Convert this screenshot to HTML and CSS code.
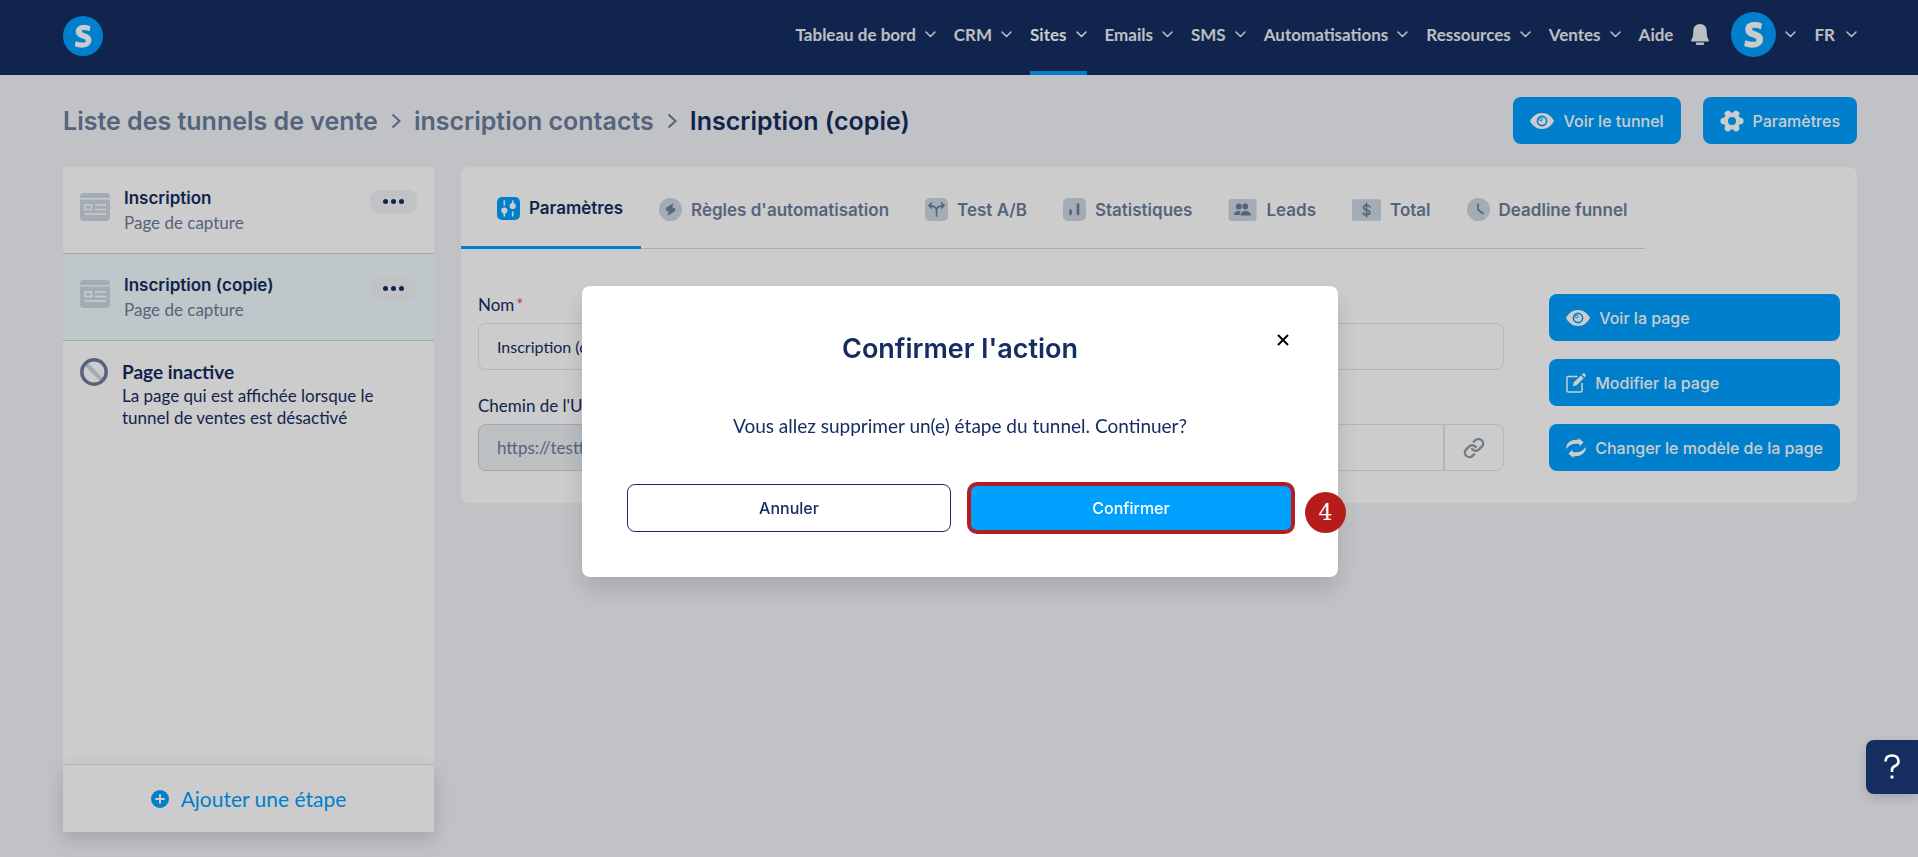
FILE: index.html
```html
<!DOCTYPE html>
<html lang="fr">
<head>
<meta charset="utf-8">
<meta name="viewport" content="width=device-width, initial-scale=1">
<title>Inscription (copie)</title>
<link rel="stylesheet" href="styles.css">
</head>
<body>
<svg class="defs" width="0" height="0" aria-hidden="true">
  <symbol id="logo" viewBox="0 0 40 40"><circle cx="20" cy="20" r="20" fill="#00a0ff"/><path d="M27 10.600C23.700 9 13.200 7.800 13.200 15.500C13.200 23 23.200 21 23.200 25C23.200 27.800 17.500 27.300 13 25.800L12.300 30C17.500 32 28 32.200 28 23.800C28 17.200 18.200 18.500 18.200 15C18.200 12.900 22.500 13.500 26.200 14.600Z" fill="#fff" stroke="#fff" stroke-width="1"/></symbol>
  <symbol id="chevron" viewBox="0 0 11 7"><path d="M1 1l4.500 4.500L10 1" fill="none" stroke="currentColor" stroke-width="1.500" stroke-linecap="round" stroke-linejoin="round"/></symbol>
  <symbol id="crumb" viewBox="0 0 10 16"><path d="M1.500 1.500L8.500 8l-7 6.500" fill="none" stroke="currentColor" stroke-width="2"/></symbol>
  <symbol id="bell" viewBox="0 0 18 21"><path d="M9 0C4.800 0 2.300 3 2.300 7C2.300 11.500 1.800 13.200.400 15.600C-.200 16.700.300 17.500 1.200 17.500H16.800C17.700 17.500 18.200 16.700 17.600 15.600C16.200 13.200 15.700 11.500 15.700 7C15.700 3 13.200 0 9 0ZM5 18.500H13V20Q13 21 12 21H6Q5 21 5 20Z" fill="currentColor"/></symbol>
  <symbol id="eye" viewBox="0 0 24 16"><path d="M12 0C6.500 0 2.500 3.500 0 8C2.500 12.500 6.500 16 12 16S21.500 12.500 24 8C21.500 3.500 17.500 0 12 0Z" fill="currentColor"/><circle cx="12" cy="8" r="4.600" fill="none" stroke="#00a0ff" stroke-width="1.600"/><circle cx="10.800" cy="6.500" r="1.400" fill="none" stroke="#00a0ff" stroke-width="1"/></symbol>
  <symbol id="gear" viewBox="0 0 24 24"><g fill="currentColor"><circle cx="12" cy="12" r="8.500"/><rect x="0.500" y="8.800" width="23" height="6.400" rx="3"/><rect x="0.500" y="8.800" width="23" height="6.400" rx="3" transform="rotate(60 12 12)"/><rect x="0.500" y="8.800" width="23" height="6.400" rx="3" transform="rotate(120 12 12)"/></g><circle cx="12" cy="12" r="4" fill="#00a0ff"/></symbol>
  <symbol id="page" viewBox="0 0 30 28"><path d="M4 0H26Q30 0 30 4V5H0V4Q0 0 4 0ZM0 6.500H30V24Q30 28 26 28H4Q0 28 0 24Z" fill="#ccd6e2"/><g fill="none" stroke="#fff" stroke-width="1.500"><rect x="5" y="11.800" width="6.500" height="4.800"/><path d="M15 12H26M15 16.500H26M4.500 21H26"/></g></symbol>
</svg>

<header class="topbar">
  <a class="brand" href="#" aria-label="Accueil"><svg><use href="#logo"/></svg></a>
  <nav class="nav" aria-label="Navigation principale">
    <a href="#">Tableau de bord<svg class="chev"><use href="#chevron"/></svg></a>
    <a href="#">CRM<svg class="chev"><use href="#chevron"/></svg></a>
    <a href="#" class="current">Sites<svg class="chev"><use href="#chevron"/></svg></a>
    <a href="#">Emails<svg class="chev"><use href="#chevron"/></svg></a>
    <a href="#">SMS<svg class="chev"><use href="#chevron"/></svg></a>
    <a href="#">Automatisations<svg class="chev"><use href="#chevron"/></svg></a>
    <a href="#">Ressources<svg class="chev"><use href="#chevron"/></svg></a>
    <a href="#">Ventes<svg class="chev"><use href="#chevron"/></svg></a>
    <a href="#">Aide</a>
    <button class="bell" aria-label="Notifications"><svg><use href="#bell"/></svg></button>
    <button class="account" aria-label="Compte"><svg class="avatar"><use href="#logo"/></svg><svg class="chev"><use href="#chevron"/></svg></button>
    <button class="lang">FR<svg class="chev"><use href="#chevron"/></svg></button>
  </nav>
</header>

<main class="page">
  <div class="heading">
    <h1 class="crumbs">
      <a href="#">Liste des tunnels de vente</a><svg><use href="#crumb"/></svg><a href="#">inscription contacts</a><svg><use href="#crumb"/></svg><span>Inscription (copie)</span>
    </h1>
    <div class="heading-actions">
      <button class="btn"><svg class="i-eye"><use href="#eye"/></svg>Voir le tunnel</button>
      <button class="btn"><svg class="i-gear"><use href="#gear"/></svg>Paramètres</button>
    </div>
  </div>

  <div class="columns">
    <aside class="steps">
      <div class="step">
        <svg class="step-icon"><use href="#page"/></svg>
        <div class="step-text"><a href="#">Inscription</a><p>Page de capture</p></div>
        <button class="more" aria-label="Options"><i></i><i></i><i></i></button>
      </div>
      <div class="step selected">
        <svg class="step-icon"><use href="#page"/></svg>
        <div class="step-text"><a href="#">Inscription (copie)</a><p>Page de capture</p></div>
        <button class="more" aria-label="Options"><i></i><i></i><i></i></button>
      </div>
      <div class="inactive">
        <svg viewBox="0 0 28 28"><path d="M6 6l16 16" stroke="#ccd6e2" stroke-width="4"/><circle cx="14" cy="14" r="12.200" fill="none" stroke="#6b7e9b" stroke-width="3.500"/></svg>
        <div><h2>Page inactive</h2><p>La page qui est affichée lorsque le tunnel de ventes est désactivé</p></div>
      </div>
      <button class="add"><svg viewBox="0 0 18 18"><circle cx="9" cy="9" r="9" fill="#00a0ff"/><path d="M9 5v8M5 9h8" stroke="#fff" stroke-width="2" stroke-linecap="round"/></svg>Ajouter une étape</button>
    </aside>

    <section class="panel">
      <nav class="tabs" aria-label="Sections">
        <a href="#" class="active"><svg viewBox="0 0 23 23"><rect width="23" height="23" rx="5" fill="#00a0ff"/><g stroke="#fff" stroke-width="1.600" stroke-linecap="round" fill="#fff"><path d="M7.300 4v4M7.300 13v6M15.700 4v5M15.700 15v4"/><circle cx="7.300" cy="13.500" r="2.300"/><circle cx="15.700" cy="9" r="2.300"/></g></svg>Paramètres</a>
        <a href="#"><svg viewBox="0 0 23 23"><circle cx="11.500" cy="11.500" r="11.500" fill="#ccd6e2"/><path d="M14 5.800L7.300 9.800V12.800H10.300L9 17.200L15.800 13V10.200H12.800Z" fill="#6b7e9b" stroke="#6b7e9b" stroke-width=".6" stroke-linejoin="round"/></svg>Règles d'automatisation</a>
        <a href="#"><svg viewBox="0 0 23 23"><rect width="23" height="23" rx="5" fill="#ccd6e2"/><path d="M11.500 18V12Q11.500 8 4 7.500M11.500 12Q11.500 8 19 7.500M6.500 5L4 7.500L6.500 10M16.500 5L19 7.500L16.500 10" fill="none" stroke="#6b7e9b" stroke-width="1.700" stroke-linecap="round" stroke-linejoin="round"/></svg>Test A/B</a>
        <a href="#"><svg viewBox="0 0 23 23"><rect width="23" height="23" rx="5" fill="#ccd6e2"/><path d="M7.500 12.500v3.500M15 6.500v9.500" stroke="#6b7e9b" stroke-width="2.600" stroke-linecap="round"/></svg>Statistiques</a>
        <a href="#"><svg class="wide" viewBox="0 0 28 22"><rect width="28" height="22" rx="3" fill="#ccd6e2"/><g fill="#6b7e9b"><circle cx="10.300" cy="7.500" r="2.900"/><circle cx="16.800" cy="7.500" r="2.900"/><path d="M5.500 16Q5.500 12 10 12Q12 12 12.300 12.500Q11 13.500 11 16ZM12 16.500Q12 12 17 12T22.500 16.500Z"/></g></svg>Leads</a>
        <a href="#"><svg class="wide" viewBox="0 0 30 22"><rect width="30" height="22" rx="2" fill="#ccd6e2"/><path d="M18.500 8Q18 6 15 6T11.800 8.400Q11.800 10.300 15 11T18.500 13.700Q18.500 16 15 16T11.500 14M15 4V18" fill="none" stroke="#6b7e9b" stroke-width="1.600" stroke-linecap="round"/></svg>Total</a>
        <a href="#"><svg viewBox="0 0 23 23"><circle cx="11.500" cy="11.500" r="11.500" fill="#ccd6e2"/><path d="M11 6V11.500L16 15.500" fill="none" stroke="#6b7e9b" stroke-width="1.700" stroke-linecap="round" stroke-linejoin="round"/></svg>Deadline funnel</a>
      </nav>
      <div class="panel-body">
        <form class="form">
          <label for="name">Nom<span class="req">*</span></label>
          <input id="name" class="field" type="text" value="Inscription (copie)">
          <label for="path">Chemin de l'URL</label>
          <div class="path field">
            <span class="prefix">https://testt</span>
            <input id="path" type="text">
            <button type="button" aria-label="Copier le lien"><svg viewBox="0 0 24 24"><g fill="none" stroke="#8f9dad" stroke-width="2.600" stroke-linecap="round" stroke-linejoin="round"><path d="M10 13a5 5 0 0 0 7.540.540l3-3a5 5 0 0 0-7.070-7.070l-1.720 1.710"/><path d="M14 11a5 5 0 0 0-7.540-.540l-3 3a5 5 0 0 0 7.070 7.070l1.710-1.710"/></g></svg></button>
          </div>
        </form>
        <div class="side-actions">
          <button class="btn"><svg class="i-eye"><use href="#eye"/></svg>Voir la page</button>
          <button class="btn"><svg class="i-sq" viewBox="0 0 20 20"><path d="M11.500 3.500H2.500Q1 3.500 1 5V17.500Q1 19 2.500 19H14.500Q16 19 16 17.500V10" fill="none" stroke="currentColor" stroke-width="1.500"/><path d="M6.800 13.200L7.800 9.300L14.800 2.500L17.600 5.200L10.700 12.200ZM15.700 1.600L16.600.700Q17.700-.200 18.900.800Q20.400 2.200 19.400 3.400L18.500 4.300Z" fill="currentColor"/></svg>Modifier la page</button>
          <button class="btn"><svg class="i-sq" viewBox="0 0 20 20"><g id="arrow" fill="currentColor"><path d="M0 11C0 5.500 5 .800 12.500 2V0L17.500 4.200L13.500 8.500V6C8 4.800 3.500 6.500 0 11Z"/></g><use href="#arrow" transform="rotate(180 10 10)"/></svg>Changer le modèle de la page</button>
        </div>
      </div>
    </section>
  </div>
</main>

<div class="backdrop">
  <div class="modal" role="dialog" aria-modal="true" aria-labelledby="dlg-title">
    <button class="close" aria-label="Fermer"><svg viewBox="0 0 12 12"><path d="M1 1l10 10M11 1L1 11" stroke="#000" stroke-width="2"/></svg></button>
    <h2 id="dlg-title">Confirmer l'action</h2>
    <p>Vous allez supprimer un(e) étape du tunnel. Continuer?</p>
    <div class="modal-actions">
      <button class="cancel">Annuler</button>
      <button class="confirm">Confirmer</button>
      <span class="marker">4</span>
    </div>
  </div>
</div>

<button class="help" aria-label="Aide"><svg viewBox="0 0 16 26"><path d="M1.500 7.500Q1.500 1.500 8 1.500T14.500 7.300Q14.500 10.500 11 12Q8 13.500 8 15.500V18" fill="none" stroke="#fff" stroke-width="2.600"/><circle cx="8" cy="23" r="1.700" fill="#fff"/></svg></button>
</body>
</html>
```
FILE: styles.css
```css
:root {
  --navy: #152d61;
  --blue: #00a0ff;
  --slate: #6b7e9b;
  --line: #e0e5e9;
  --red: #b71c1c;
  --body: Lato, "Noto Sans", sans-serif;
  --ui: Inter, "Liberation Sans", sans-serif;
}

* { box-sizing: border-box; }
h1, h2, p { margin: 0; }
a { color: inherit; text-decoration: none; }
button { margin: 0; padding: 0; border: 0; background: none; color: inherit; font: inherit; cursor: pointer; }
svg { display: block; flex: none; }

body {
  margin: 0;
  min-height: 100vh;
  display: flex;
  flex-direction: column;
  background: #f2f3f8;
  color: var(--navy);
  font: 17px/22px var(--body);
}
.defs { position: absolute; }

/* Top bar */
.topbar {
  display: flex;
  justify-content: space-between;
  align-items: center;
  height: 75px;
  padding: 0 61px 0 63px;
  background: var(--navy);
  color: #ebeef3;
}
.brand { padding-bottom: 4px; }
.brand svg { width: 40px; height: 40px; }
.nav { display: flex; align-self: stretch; gap: 18px; font-size: 17px; font-weight: 700; }
.nav > * { display: flex; align-items: center; gap: 9px; padding-bottom: 6px; }
.nav .current { color: #fff; border-bottom: 4px solid var(--blue); padding-bottom: 2px; }
.chev { width: 11px; height: 7px; }
.bell svg { width: 18px; height: 21px; }
.avatar { width: 45px; height: 45px; }
.account { padding-left: 4px; }
.lang { gap: 11px; }

/* Page */
.page { flex: 1; display: flex; flex-direction: column; padding: 22px 61px 25px 63px; }
.heading { display: flex; justify-content: space-between; align-items: center; margin-bottom: 23px; }
.crumbs { display: flex; align-items: center; gap: 13px; font: 600 25px/32px var(--ui); }
.crumbs a, .crumbs svg { color: var(--slate); }
.crumbs svg { width: 10px; height: 16px; }
.heading-actions { display: flex; gap: 22px; }

.btn {
  display: flex;
  align-items: center;
  gap: 9px;
  height: 47px;
  padding: 0 17px;
  border-radius: 8px;
  background: var(--blue);
  color: #fff;
  font: 500 16px/20px var(--ui);
}
.i-eye { width: 24px; height: 16px; }
.i-gear { width: 24px; height: 24px; }
.i-sq { width: 20px; height: 20px; }

.columns { flex: 1; display: grid; grid-template-columns: 371px minmax(0, 1fr); gap: 27px; align-items: start; }

/* Steps */
.steps { align-self: stretch; display: flex; flex-direction: column; background: #fff; }
.step { display: flex; align-items: flex-start; gap: 14px; padding: 19px 17px 18px; border-bottom: 1px solid #c8d2dc; }
.step.selected { background: #f0f9fd; }
.step-icon { width: 30px; height: 28px; margin-top: 7px; }
.step-text { flex: 1; }
.step-text a { display: block; font: 600 17px/24px var(--ui); }
.step-text p { color: var(--slate); line-height: 25px; }
.more { display: flex; justify-content: center; align-items: center; gap: 3px; width: 47px; height: 23px; margin-top: 4px; border-radius: 9px; background: #f2f3f8; }
.more i { width: 5px; height: 5px; border-radius: 50%; background: var(--navy); }
.inactive { display: flex; gap: 14px; padding: 17px; }
.inactive svg { width: 28px; height: 28px; }
.inactive h2 { font-size: 19px; line-height: 27px; }
.add {
  display: flex;
  align-items: center;
  justify-content: center;
  gap: 12px;
  height: 68px;
  margin-top: auto;
  border-top: 1px solid var(--line);
  box-shadow: 0 8px 18px rgba(60, 66, 80, .2);
  color: var(--blue);
  font-size: 21px;
}
.add svg { width: 18px; height: 18px; }

/* Panel */
.panel { display: flex; flex-direction: column; align-items: flex-start; border-radius: 8px; background: #fff; }
.tabs { display: flex; height: 82px; border-bottom: 1px solid #d4d8e6; color: var(--slate); font: 600 17px/20px var(--ui); }
.tabs a { display: flex; align-items: center; gap: 9px; padding: 4px 18px 0; }
.tabs .active { margin-bottom: -1px; padding: 3px 18px 0 36px; border-bottom: 3px solid var(--blue); color: var(--navy); }
.tabs svg { width: 23px; height: 23px; }
.tabs .wide { width: 29px; height: 22px; }
.panel-body { display: flex; align-self: stretch; gap: 45px; padding: 45px 17px 32px; }
.form { flex: 1; display: flex; flex-direction: column; }
.form label { margin-bottom: 7px; line-height: 22px; }
.req { margin-left: 2px; color: #ff3b5c; line-height: 1; }
.field { height: 47px; margin-bottom: 25px; border: 1px solid var(--line); border-radius: 8px; background: #fff; }
.field:last-child { margin-bottom: 0; }
.form input { min-width: 0; color: var(--navy); font: 16px/22px var(--body); }
.form input.field { padding: 0 18px; }
.path { display: flex; }
.path .prefix { display: flex; align-items: center; width: 240px; margin: -1px; padding: 0 18px; border: 1px solid #c9d5df; border-radius: 8px 0 0 8px; background: #ebf0f4; color: var(--slate); }
.path input { flex: 1; border: 0; background: none; }
.path button { display: grid; place-items: center; width: 60px; border-left: 2px solid var(--line); }
.path button svg { width: 22px; height: 22px; }
.side-actions { display: flex; flex-direction: column; gap: 18px; }

/* Dialog */
.backdrop { position: fixed; inset: 0; display: grid; place-items: center; padding: 6px 0 0 2px; background: rgba(0, 0, 0, .2); }
.modal { position: relative; width: 756px; max-width: 90vw; padding: 45px 45px 45px; border-radius: 8px; background: #fff; box-shadow: 0 12px 24px rgba(0, 0, 0, .14); text-align: center; }
.modal h2 { margin-bottom: 44px; font: 600 27px/36px var(--ui); }
.modal p { margin-bottom: 43px; font-size: 19px; line-height: 30px; }
.close { position: absolute; top: 43px; right: 44px; padding: 5px; }
.close svg { width: 12px; height: 12px; }
.modal-actions { position: relative; display: grid; grid-template-columns: 1fr 1fr; gap: 18px; font: 500 16px/20px var(--ui); }
.modal-actions button { height: 48px; border-radius: 8px; }
.cancel { border: 1px solid var(--navy); }
.confirm { background: var(--blue); color: #fff; box-shadow: inset 0 0 0 2px var(--red), 0 0 0 2px var(--red); }
.marker { position: absolute; right: -53px; top: 8px; width: 41px; height: 41px; border-radius: 50%; background: var(--red); color: #fff; font: 22px/41px "DejaVu Serif", serif; }

/* Help */
.help { position: fixed; right: 0; top: 740px; display: grid; place-items: center; width: 52px; height: 54px; border-radius: 8px 0 0 8px; background: var(--navy); box-shadow: 0 4px 12px rgba(0, 0, 0, .16); }
.help svg { width: 16px; height: 26px; }
```
